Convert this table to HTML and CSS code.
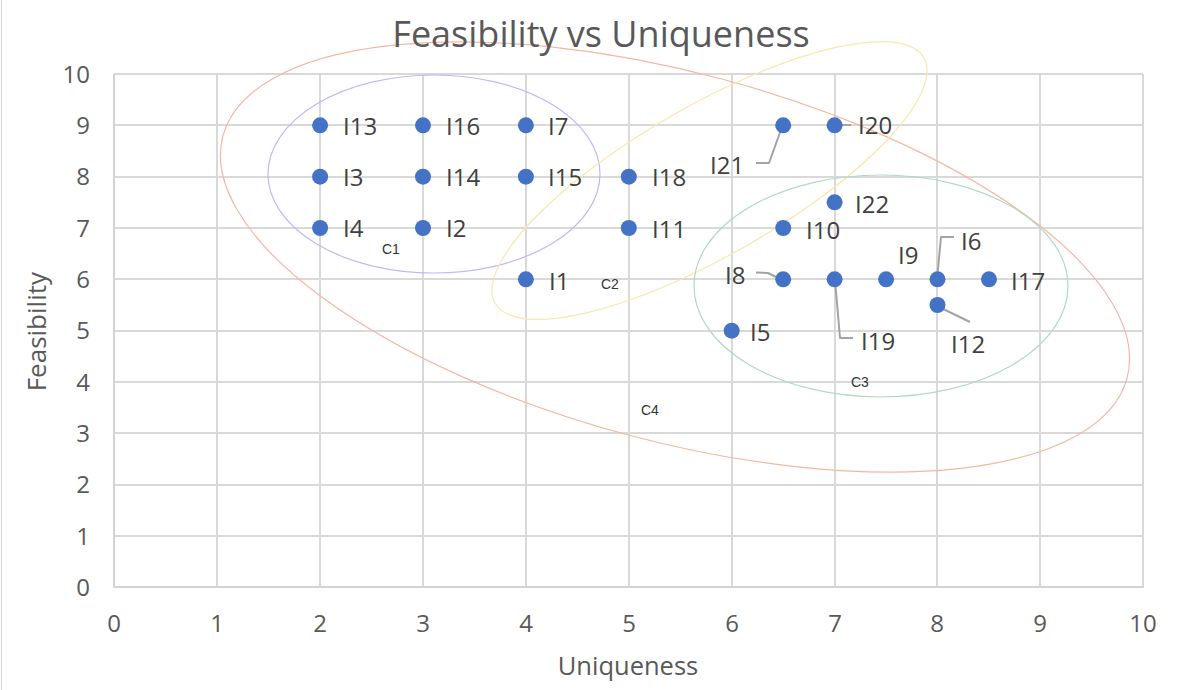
FILE: index.html
```html
<!DOCTYPE html>
<html lang="en">
<head>
<meta charset="utf-8">
<title>Feasibility vs Uniqueness</title>
<link rel="stylesheet" href="styles.css">
</head>
<body>
<div class="chart">
  <h1 class="chart-title">Feasibility vs Uniqueness</h1>
  <div class="chart-body">
    <div class="y-title"><span>Feasibility</span></div>
    <svg class="plot" width="1140" height="590" viewBox="60 58 1140 590" xmlns="http://www.w3.org/2000/svg">
      <g class="grid">
        <line x1="217" y1="74" x2="217" y2="587"/>
        <line x1="320" y1="74" x2="320" y2="587"/>
        <line x1="423" y1="74" x2="423" y2="587"/>
        <line x1="526" y1="74" x2="526" y2="587"/>
        <line x1="629" y1="74" x2="629" y2="587"/>
        <line x1="732" y1="74" x2="732" y2="587"/>
        <line x1="835" y1="74" x2="835" y2="587"/>
        <line x1="937" y1="74" x2="937" y2="587"/>
        <line x1="1040" y1="74" x2="1040" y2="587"/>
        <line x1="1143" y1="74" x2="1143" y2="587"/>
        <line x1="114" y1="74" x2="1143" y2="74"/>
        <line x1="114" y1="125" x2="1143" y2="125"/>
        <line x1="114" y1="177" x2="1143" y2="177"/>
        <line x1="114" y1="228" x2="1143" y2="228"/>
        <line x1="114" y1="279" x2="1143" y2="279"/>
        <line x1="114" y1="331" x2="1143" y2="331"/>
        <line x1="114" y1="382" x2="1143" y2="382"/>
        <line x1="114" y1="433" x2="1143" y2="433"/>
        <line x1="114" y1="485" x2="1143" y2="485"/>
        <line x1="114" y1="536" x2="1143" y2="536"/>
      </g>
      <g class="axis">
        <line x1="114" y1="74" x2="114" y2="588"/>
        <line x1="113" y1="587" x2="1144" y2="587"/>
      </g>

      <g class="ticks-y">
        <text x="90" y="82.5">10</text>
        <text x="90" y="133.8">9</text>
        <text x="90" y="185.2">8</text>
        <text x="90" y="236.5">7</text>
        <text x="90" y="287.8">6</text>
        <text x="90" y="339.2">5</text>
        <text x="90" y="390.5">4</text>
        <text x="90" y="441.8">3</text>
        <text x="90" y="493.1">2</text>
        <text x="90" y="544.5">1</text>
        <text x="90" y="595.8">0</text>
      </g>
      <g class="ticks-x">
        <text x="114" y="632">0</text>
        <text x="217" y="632">1</text>
        <text x="320" y="632">2</text>
        <text x="423" y="632">3</text>
        <text x="526" y="632">4</text>
        <text x="629" y="632">5</text>
        <text x="732" y="632">6</text>
        <text x="835" y="632">7</text>
        <text x="937" y="632">8</text>
        <text x="1040" y="632">9</text>
        <text x="1143" y="632">10</text>
      </g>

      <g class="clusters">
        <ellipse class="c4" cx="675" cy="257" rx="468" ry="184" transform="rotate(15 675 257)"/>
        <ellipse class="c1" cx="434" cy="174" rx="166" ry="99"/>
        <ellipse class="c2" cx="709.5" cy="180.5" rx="247" ry="75" transform="rotate(-29.8 709.5 180.5)"/>
        <ellipse class="c3" cx="881" cy="286" rx="187" ry="111"/>
      </g>

      <g class="leaders">
        <polyline points="756,163 769,163 782,127"/>
        <polyline points="835,125 851,125"/>
        <polyline points="756,272.5 768,273 782,280"/>
        <polyline points="835,280 840,338 853,338"/>
        <polyline points="954,237 941,237 937,280"/>
        <polyline points="937,306 970,322"/>
      </g>

      <g class="points">
        <circle cx="320.1" cy="125.3" r="8"/>
        <circle cx="423" cy="125.3" r="8"/>
        <circle cx="525.9" cy="125.3" r="8"/>
        <circle cx="320.1" cy="176.7" r="8"/>
        <circle cx="423" cy="176.7" r="8"/>
        <circle cx="525.9" cy="176.7" r="8"/>
        <circle cx="628.8" cy="176.7" r="8"/>
        <circle cx="320.1" cy="228" r="8"/>
        <circle cx="423" cy="228" r="8"/>
        <circle cx="628.8" cy="228" r="8"/>
        <circle cx="525.9" cy="279.3" r="8"/>
        <circle cx="783.2" cy="125.3" r="8"/>
        <circle cx="834.6" cy="125.3" r="8"/>
        <circle cx="834.6" cy="202.3" r="8"/>
        <circle cx="783.2" cy="228" r="8"/>
        <circle cx="783.2" cy="279.3" r="8"/>
        <circle cx="834.6" cy="279.3" r="8"/>
        <circle cx="886.1" cy="279.3" r="8"/>
        <circle cx="937.5" cy="279.3" r="8"/>
        <circle cx="989" cy="279.3" r="8"/>
        <circle cx="937.5" cy="305" r="8"/>
        <circle cx="731.7" cy="330.7" r="8"/>
      </g>

      <g class="labels">
        <text x="343" y="134.5">I13</text>
        <text x="446" y="134.5">I16</text>
        <text x="548" y="134.5">I7</text>
        <text x="343" y="185.5">I3</text>
        <text x="446" y="185.5">I14</text>
        <text x="548" y="185.5">I15</text>
        <text x="652" y="185.5">I18</text>
        <text x="343" y="236.5">I4</text>
        <text x="446" y="236.5">I2</text>
        <text x="652" y="237.5">I11</text>
        <text x="549" y="289.5">I1</text>
        <text x="858" y="133.5">I20</text>
        <text x="710" y="173.5">I21</text>
        <text x="855" y="212.5">I22</text>
        <text x="806" y="238.5">I10</text>
        <text x="898" y="263.5">I9</text>
        <text x="961" y="249.5">I6</text>
        <text x="725" y="283.5">I8</text>
        <text x="1011" y="289.5">I17</text>
        <text x="750" y="340.5">I5</text>
        <text x="861" y="349.5">I19</text>
        <text x="951" y="352.5">I12</text>
      </g>

      <g class="cluster-names">
        <text x="382" y="253.5">C1</text>
        <text x="601" y="288.5">C2</text>
        <text x="851" y="386.5">C3</text>
        <text x="641" y="414.5">C4</text>
      </g>
    </svg>
  </div>
  <div class="x-title">Uniqueness</div>
</div>
</body>
</html>
```
FILE: styles.css
```css
html, body {
  margin: 0;
  padding: 0;
  background: #ffffff;
}

body {
  width: 1200px;
  height: 690px;
  overflow: hidden;
  font-family: "Open Sans", "Noto Sans", sans-serif;
}

.chart {
  margin-left: 1px;
  border-left: 1px solid #d6d6d6;
  height: 690px;
  display: flex;
  flex-direction: column;
}

.chart-title {
  position: relative;
  z-index: 1;
  margin: 0;
  padding-top: 9px;
  height: 49px;
  font-size: 36px;
  font-weight: 400;
  line-height: 49px;
  text-align: center;
  color: #595959;
  white-space: nowrap;
}

.chart-body {
  display: flex;
  height: 590px;
}

.y-title {
  box-sizing: border-box;
  width: 58px;
  flex: none;
  padding-left: 10px;
  padding-bottom: 42px;
  display: flex;
  align-items: center;
  justify-content: center;
}

.y-title span {
  writing-mode: vertical-rl;
  transform: rotate(180deg);
  font-size: 26px;
  line-height: 35px;
  color: #595959;
  white-space: nowrap;
}

.plot {
  display: block;
  flex: none;
  overflow: visible;
}

.x-title {
  box-sizing: border-box;
  height: 42px;
  padding-left: 54px;
  font-size: 25.5px;
  line-height: 35px;
  text-align: center;
  color: #595959;
}

.grid line {
  stroke: #d9d9d9;
  stroke-width: 2;
}

.axis line {
  stroke: #d3d3d3;
  stroke-width: 2;
}

.ticks-y text,
.ticks-x text {
  font-family: "Open Sans", sans-serif;
  font-size: 24px;
  fill: #595959;
}

.ticks-y text {
  text-anchor: end;
}

.ticks-x text {
  text-anchor: middle;
}

.clusters ellipse {
  fill: none;
  stroke-width: 1.2;
}

.clusters .c1 { stroke: #c4b6fb; }
.clusters .c2 { stroke: #fde6ac; }
.clusters .c3 { stroke: #afdbc4; }
.clusters .c4 { stroke: #f7b6a4; }

.leaders polyline {
  fill: none;
  stroke: #a3a3a3;
  stroke-width: 2;
  stroke-linejoin: round;
}

.points circle {
  fill: #4472c4;
}

.labels text {
  font-family: "Open Sans", sans-serif;
  font-size: 24px;
  fill: #404040;
}

.cluster-names text {
  font-family: "Liberation Sans", Arial, sans-serif;
  font-size: 14px;
  fill: #333333;
}
```
